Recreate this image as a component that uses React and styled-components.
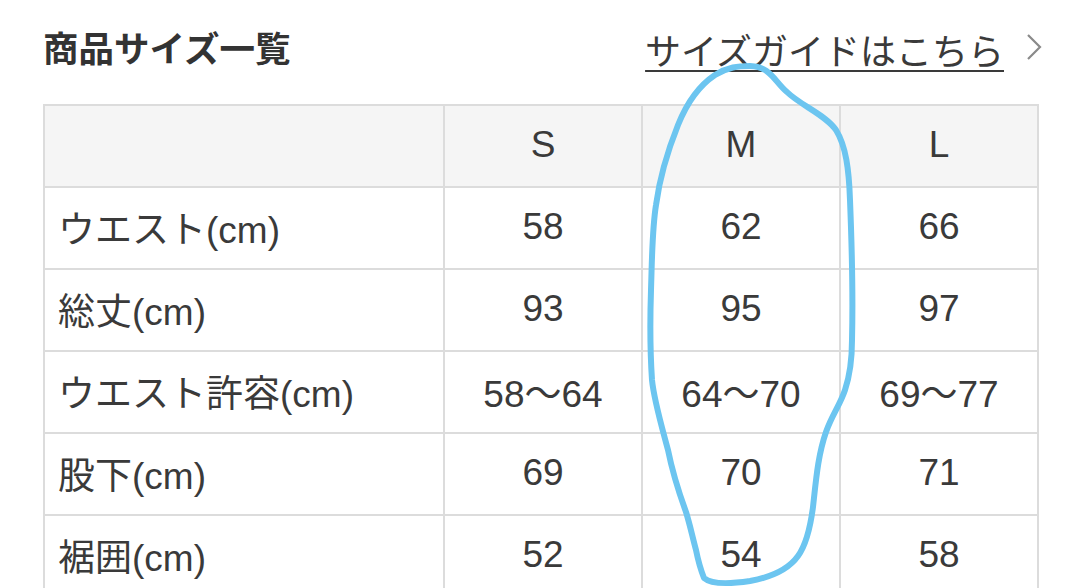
import React from "react";
import styled, { createGlobalStyle } from "styled-components";

const GlobalStyle = createGlobalStyle`
  html, body {
    margin: 0;
    padding: 0;
    background: #fff;
  }
  body {
    font-family: "Liberation Sans", "Noto Sans CJK JP", sans-serif;
    color: #3a3a3a;
    overflow: hidden;
  }
`;

const Page = styled.div`
  position: relative;
  width: 1080px;
  height: 588px;
  overflow: hidden;
  background: #fff;
`;

const Header = styled.div`
  display: flex;
  align-items: center;
  justify-content: space-between;
  padding: 29px 38px 0 43px;
  height: 36px;
  margin-bottom: 39px;
`;

const Title = styled.h2`
  margin: 0;
  font-family: "Noto Sans CJK JP", sans-serif;
  font-size: 35.5px;
  line-height: 36px;
  font-weight: 700;
  color: #333;
`;

const GuideLink = styled.a`
  display: flex;
  align-items: center;
  gap: 22px;
  color: #3a3a3a;
  text-decoration: none;
  cursor: pointer;

  .label {
    font-family: "Noto Sans CJK JP", sans-serif;
    font-size: 36px;
    line-height: 36px;
    text-decoration: underline;
    text-decoration-thickness: 2px;
    text-underline-offset: 5px;
    margin-top: 4px;
  }
`;

const Grid = styled.div`
  display: grid;
  grid-template-columns: 400px repeat(3, 198px);
  margin-left: 43px;
  border-left: 2px solid #dcdcdc;
  border-top: 2px solid #dcdcdc;
  width: max-content;
`;

const Cell = styled.div`
  box-sizing: border-box;
  height: 82px;
  border-right: 2px solid #dcdcdc;
  border-bottom: 2px solid #dcdcdc;
  background: ${(p) => (p.$head ? "#f5f5f5" : "#fff")};
  display: flex;
  align-items: center;
  justify-content: ${(p) => (p.$label ? "flex-start" : "center")};
  padding: ${(p) => (p.$label ? "0 0 2px 13px" : "0 0 2px")};
  font-size: 37px;
  color: #3a3a3a;
  white-space: nowrap;
`;

const Loop = styled.svg`
  position: absolute;
  left: 0;
  top: 0;
  pointer-events: none;
`;

const sizes = ["S", "M", "L"];

const rows = [
  { label: "ウエスト(cm)", values: ["58", "62", "66"] },
  { label: "総丈(cm)", values: ["93", "95", "97"] },
  { label: "ウエスト許容(cm)", values: ["58〜64", "64〜70", "69〜77"] },
  { label: "股下(cm)", values: ["69", "70", "71"] },
  { label: "裾囲(cm)", values: ["52", "54", "58"] },
];

const Chevron = () => (
  <svg width="16" height="28" viewBox="0 0 16 28" fill="none">
    <path d="M2 2 L14 14 L2 26" stroke="#8a8a8a" strokeWidth="2.2" />
  </svg>
);

export default function App() {
  return (
    <Page>
      <GlobalStyle />
      <Header>
        <Title>商品サイズ一覧</Title>
        <GuideLink>
          <span className="label">サイズガイドはこちら</span>
          <Chevron />
        </GuideLink>
      </Header>
      <Grid>
        <Cell $head $label />
        {sizes.map((s) => (
          <Cell key={s} $head>
            {s}
          </Cell>
        ))}
        {rows.map((r) => (
          <React.Fragment key={r.label}>
            <Cell $label>{r.label}</Cell>
            {r.values.map((v, i) => (
              <Cell key={i}>{v}</Cell>
            ))}
          </React.Fragment>
        ))}
      </Grid>
      <Loop width="1080" height="588" viewBox="0 0 1080 588">
        <path
          d="M750 66 C770 66 775 82 787 92 C800 105 826 115 836 130 C846 146 849 170 850 200 C852 250 853 300 852 340 C852 360 850 375 845 390 C840 405 832 415 826 432 C818 455 816 480 813 507 C810 530 806 545 798 556 C788 570 772 577 750 581 C730 584 712 585 704 578 C700 568 698 560 696 550 C692 535 690 525 686 512 C678 490 672 470 668 450 C660 420 654 400 652 380 C650 350 650 320 651 290 C652 260 652 230 656 205 C660 175 668 150 678 125 C688 100 700 85 715 75 C728 67 738 66 750 66"
          stroke="#6cc5f0"
          strokeWidth="6"
          fill="none"
          strokeLinecap="round"
          strokeLinejoin="round"
        />
      </Loop>
    </Page>
  );
}
